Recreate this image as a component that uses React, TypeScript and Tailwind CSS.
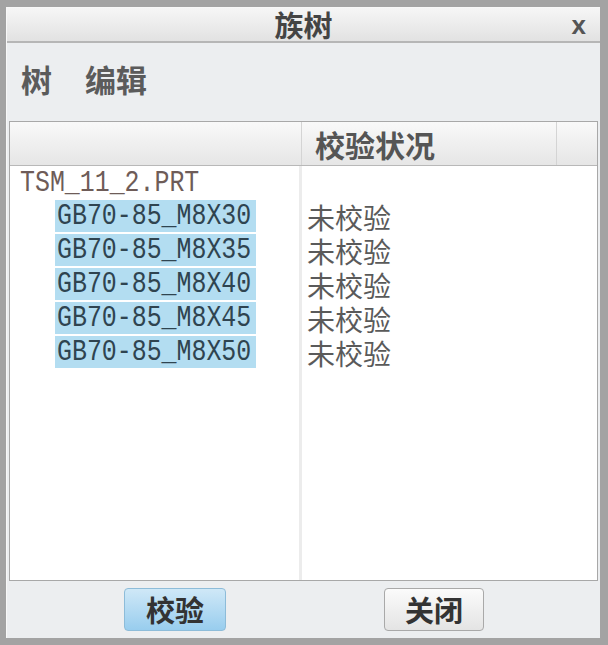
import React from 'react';

const cjk = "font-['Noto_Sans_CJK_SC','Noto_Sans',sans-serif]";
const mono = "font-['Liberation_Mono','DejaVu_Sans_Mono',monospace]";

const parts = ['GB70-85_M8X30', 'GB70-85_M8X35', 'GB70-85_M8X40', 'GB70-85_M8X45', 'GB70-85_M8X50'];

const MonoText = ({ children, className = '' }: any) => (
  <span className={`${mono} inline-block origin-left scale-x-[0.83] whitespace-nowrap text-[30px] leading-[32px] ${className}`}>
    {children}
  </span>
);

export default function App() {
  return (
    <div className="w-[608px] h-[645px] bg-[#a3a3a3] pt-[7px] pl-[6px] pr-[8px] pb-[7px]">
      <div className="h-full flex flex-col bg-[#eceef0] border-l border-t border-[#f8f8f8]">
        {/* title bar */}
        <div className="relative h-[35px] flex items-center justify-center bg-gradient-to-b from-[#f6f6f6] to-[#e2e2e2] border-b-2 border-[#b6b6b6]">
          <span className={`${cjk} text-[29px] font-bold text-[#444] leading-none`}>族树</span>
          <span className="absolute right-[14px] top-[4px] font-['Liberation_Sans',sans-serif] text-[26px] font-bold leading-none text-[#555]">x</span>
        </div>

        {/* menu */}
        <div className={`${cjk} h-[73px] flex items-center gap-[33px] pl-[14px] text-[31px] font-bold text-[#5b5b5b]`}>
          <span>树</span>
          <span>编辑</span>
        </div>

        {/* tree panel */}
        <div className="mt-[5px] mx-[2px] h-[460px] flex flex-col bg-white border border-[#a8a8a8]">
          <div className="h-[44px] flex bg-gradient-to-b from-[#f9f9f9] to-[#e6e6e6] border-b border-[#b8b8b8]">
            <div className="w-[292px] border-r border-[#d4d4d4]" />
            <div className={`${cjk} w-[255px] border-r border-[#d4d4d4] pl-[13px] flex items-center text-[30px] font-bold text-[#555] leading-none`}>
              校验状况
            </div>
            <div className="flex-1" />
          </div>

          <div className="flex-1 flex">
            <div className="w-[292px] border-r-[3px] border-[#ececec]">
              <div className="h-[34px] pl-[10px] flex items-center">
                <MonoText className="text-[#6e5c58]">TSM_11_2.PRT</MonoText>
              </div>
              {parts.map((p) => (
                <div key={p} className="h-[34px] pl-[45px]">
                  <div className="w-[201px] h-[32px] bg-[#b3ddf1] pl-[2px]">
                    <MonoText className="text-[#2f4450]">{p}</MonoText>
                  </div>
                </div>
              ))}
            </div>
            <div className={`${cjk} flex-1 pl-[5px] text-[28px] text-[#5a5a5a]`}>
              <div className="h-[34px]" />
              {parts.map((p) => (
                <div key={p} className="h-[34px] leading-[34px]">未校验</div>
              ))}
            </div>
          </div>
        </div>

        {/* buttons */}
        <div className={`${cjk} flex-1 flex items-center`}>
          <button className="ml-[117px] w-[102px] h-[43px] rounded-[4px] border border-[#8dbcd9] bg-gradient-to-b from-[#cfe8f7] to-[#98cdee] text-[29px] font-bold text-[#333] leading-none">
            校验
          </button>
          <button className="ml-[158px] w-[100px] h-[43px] rounded-[4px] border border-[#a9a9a9] bg-gradient-to-b from-[#fbfbfb] to-[#e4e4e4] text-[29px] font-bold text-[#333] leading-none">
            关闭
          </button>
        </div>
      </div>
    </div>
  );
}
